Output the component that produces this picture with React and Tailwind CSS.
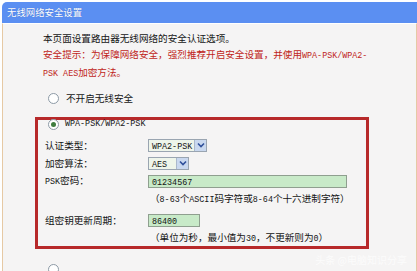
import React from "react";

const Latin = ({ children }) => (
  <span className="font-['Liberation_Mono',monospace] text-[8.4px]">{children}</span>
);

const Radio = ({ checked }) => (
  <span className="flex h-[11px] w-[11px] shrink-0 items-center justify-center rounded-full border border-[#8d9aa6] bg-white">
    {checked && <span className="h-[5px] w-[5px] rounded-full bg-[#3f7d3f]" />}
  </span>
);

function Select({ value, width }) {
  return (
    <div className={`flex h-[13px] border border-[#9aa5b1] bg-[#eef5ea] ${width}`}>
      <span className="flex-1 pl-[3px] leading-[11px]">
        <Latin>{value}</Latin>
      </span>
      <span className="flex w-[12px] items-center justify-center border-l border-[#aab8cc] bg-[#c9d8ef]">
        <svg width="8" height="6" viewBox="0 0 8 6">
          <path d="M1 1.5 L4 4.5 L7 1.5" fill="none" stroke="#2f4f9a" strokeWidth="1.6" />
        </svg>
      </span>
    </div>
  );
}

function Input({ value, width }) {
  return (
    <div className={`h-[13px] border border-[#8f9f8f] bg-[#c8eac8] pl-[3px] leading-[11px] ${width}`}>
      <Latin>{value}</Latin>
    </div>
  );
}

function Row({ label, children, extra = "" }) {
  return (
    <div className={`flex h-[18px] items-center ${extra}`}>
      <span className="w-[110px] shrink-0 pl-[7px]">{label}</span>
      {children}
    </div>
  );
}

export default function App() {
  return (
    <div className="relative h-[271px] w-[417px] overflow-hidden bg-white pl-[2px] pt-[2px] font-['Noto_Sans_CJK_SC',sans-serif] text-[9.6px] text-[#141414]">
      <div className="flex h-[21px] items-center rounded-tl-[5px] bg-[#5b8ff2] pl-[5px] text-[9.4px] text-white [text-shadow:0_0_1px_#3a66c0]">
        无线网络安全设置
      </div>
      <div className="h-[260px] border-l border-r border-t border-l-[#e6c9a4] border-r-[#e6c9a4] border-t-white bg-[#f5f4f4]">
        <div className="pl-[40px] pt-[6px] leading-[16px]">
          <div>本页面设置路由器无线网络的安全认证选项。</div>
          <div className="text-[#c01f1b]">
            安全提示：为保障网络安全，强烈推荐开启安全设置，并使用<Latin>WPA-PSK/WPA2-</Latin>
            <br />
            <Latin>PSK AES</Latin>加密方法。
          </div>
        </div>

        <div className="mt-[8px] flex h-[16px] items-center gap-[7px] pl-[45px]">
          <Radio />
          <span>不开启无线安全</span>
        </div>

        <div className="ml-[32px] mt-[11px] w-[334px] border-[3px] border-[#b7292a]">
          <div className="-mt-[1px] flex h-[10px] items-center gap-[6px] pl-[10px]">
            <Radio checked />
            <Latin>WPA-PSK/WPA2-PSK</Latin>
          </div>
          <Row label="认证类型：" extra="mt-[7px]">
            <Select value="WPA2-PSK" width="w-[59px]" />
          </Row>
          <Row label="加密算法：">
            <Select value="AES" width="w-[41px]" />
          </Row>
          <Row label={<><Latin>PSK</Latin>密码：</>}>
            <Input value="01234567" width="w-[199px]" />
          </Row>
          <Row label="">
            <span className="pl-[2px]">
              （<Latin>8-63</Latin>个<Latin>ASCII</Latin>码字符或<Latin>8-64</Latin>个十六进制字符）
            </span>
          </Row>
          <Row label="组密钥更新周期：" extra="mt-[3px]">
            <Input value="86400" width="w-[52px]" />
          </Row>
          <div className="flex h-[17px] items-center">
            <span className="w-[110px] shrink-0" />
            <span className="pl-[2px]">
              （单位为秒，最小值为<Latin>30</Latin>，不更新则为<Latin>0</Latin>）
            </span>
          </div>
        </div>

        <div className="mt-[15px] flex h-[11px] items-center pl-[45px]">
          <Radio />
        </div>
      </div>

      <div className="absolute bottom-[4px] right-[10px] text-[10px] text-white/70">
        头条 @电脑知识分享
      </div>
    </div>
  );
}
